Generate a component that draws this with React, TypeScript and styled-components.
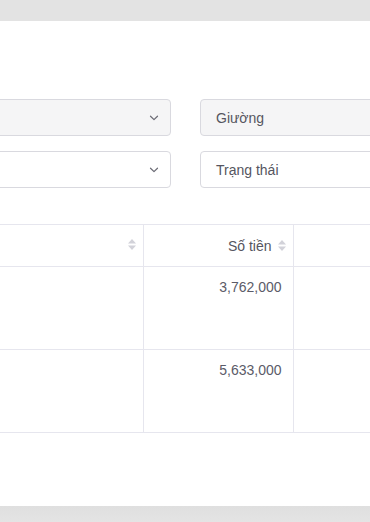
import React from 'react';
import styled, { createGlobalStyle } from 'styled-components';

const GlobalStyle = createGlobalStyle`
  body {
    margin: 0;
    background: #e3e3e3;
    font-family: 'Liberation Sans', Arial, sans-serif;
  }
`;

const Page = styled.div`
  display: flex;
  flex-direction: column;
  height: 522px;
  width: 370px;
  overflow: hidden;
`;

const TopBar = styled.div`
  height: 21px;
  flex-shrink: 0;
  background: #e3e3e3;
`;

const BottomBar = styled.div`
  height: 16px;
  flex-shrink: 0;
  background: linear-gradient(#dfdfdf, #e4e4e4);
`;

const Panel = styled.div`
  flex: 1;
  background: #ffffff;
  overflow: hidden;
`;

/* the panel is scrolled sideways, so the content starts left of the view */
const Content = styled.div`
  margin-left: -130px;
  width: 660px;
  padding-top: 78px;
`;

const Filters = styled.div`
  display: grid;
  grid-template-columns: 301px 301px;
  column-gap: 29px;
  row-gap: 15px;
`;

const Select = styled.div<{ $disabled?: boolean }>`
  box-sizing: border-box;
  height: 37px;
  display: flex;
  align-items: center;
  justify-content: space-between;
  padding: 0 11px 0 15px;
  border: 1px solid #d9d9df;
  border-radius: 4px;
  background: ${({ $disabled }) => ($disabled ? '#f5f5f6' : '#ffffff')};
  color: #555560;
  font-size: 14px;
`;

const Chevron = () => (
  <svg width="10" height="6" viewBox="0 0 10 6" fill="none">
    <path d="M1.5 1.2l3.5 3.4 3.5-3.4" stroke="#6b6b75" strokeWidth="1.2" strokeLinecap="round" strokeLinejoin="round" />
  </svg>
);

const SortIcon = () => (
  <svg width="10" height="13" viewBox="0 0 10 13">
    <path d="M5 1l4 4.5h-8z" fill="#d2d2d9" />
    <path d="M5 12l4-4.5h-8z" fill="#d2d2d9" />
  </svg>
);

const Table = styled.table`
  margin-top: 36px;
  border-collapse: collapse;
  table-layout: fixed;
  width: 660px;
  color: #5b5b68;
  font-size: 14px;
`;

const HeadCell = styled.th`
  height: 42px;
  padding: 0 6px 0 10px;
  border-top: 1px solid #e6e6ee;
  border-bottom: 1px solid #e6e6ee;
  border-right: 1px solid #e6e6ee;
  font-weight: normal;
  text-align: right;
  color: #555560;
  box-sizing: border-box;
`;

const HeadInner = styled.span`
  display: inline-flex;
  align-items: center;
  gap: 5px;
`;

const Cell = styled.td<{ $align?: 'left' | 'right' }>`
  height: 83px;
  padding: 12px 11px 0 10px;
  vertical-align: top;
  border-bottom: 1px solid #e6e6ee;
  border-right: 1px solid #e6e6ee;
  text-align: ${({ $align }) => $align || 'left'};
  box-sizing: border-box;
`;

const rows = [
  { amount: '3,762,000' },
  { amount: '5,633,000' },
];

export default function App() {
  return (
    <>
      <GlobalStyle />
      <Page>
        <TopBar />
        <Panel>
          <Content>
            <Filters>
              <Select $disabled>
                <span />
                <Chevron />
              </Select>
              <Select $disabled>
                <span>Giường</span>
              </Select>
              <Select>
                <span />
                <Chevron />
              </Select>
              <Select>
                <span>Trạng thái</span>
              </Select>
            </Filters>
            <Table>
              <colgroup>
                <col style={{ width: 273 }} />
                <col style={{ width: 150 }} />
                <col />
              </colgroup>
              <thead>
                <tr>
                  <HeadCell>
                    <HeadInner>
                      <SortIcon />
                    </HeadInner>
                  </HeadCell>
                  <HeadCell>
                    <HeadInner>
                      Số tiền
                      <SortIcon />
                    </HeadInner>
                  </HeadCell>
                  <HeadCell />
                </tr>
              </thead>
              <tbody>
                {rows.map((row) => (
                  <tr key={row.amount}>
                    <Cell />
                    <Cell $align="right">{row.amount}</Cell>
                    <Cell />
                  </tr>
                ))}
              </tbody>
            </Table>
          </Content>
        </Panel>
        <BottomBar />
      </Page>
    </>
  );
}
